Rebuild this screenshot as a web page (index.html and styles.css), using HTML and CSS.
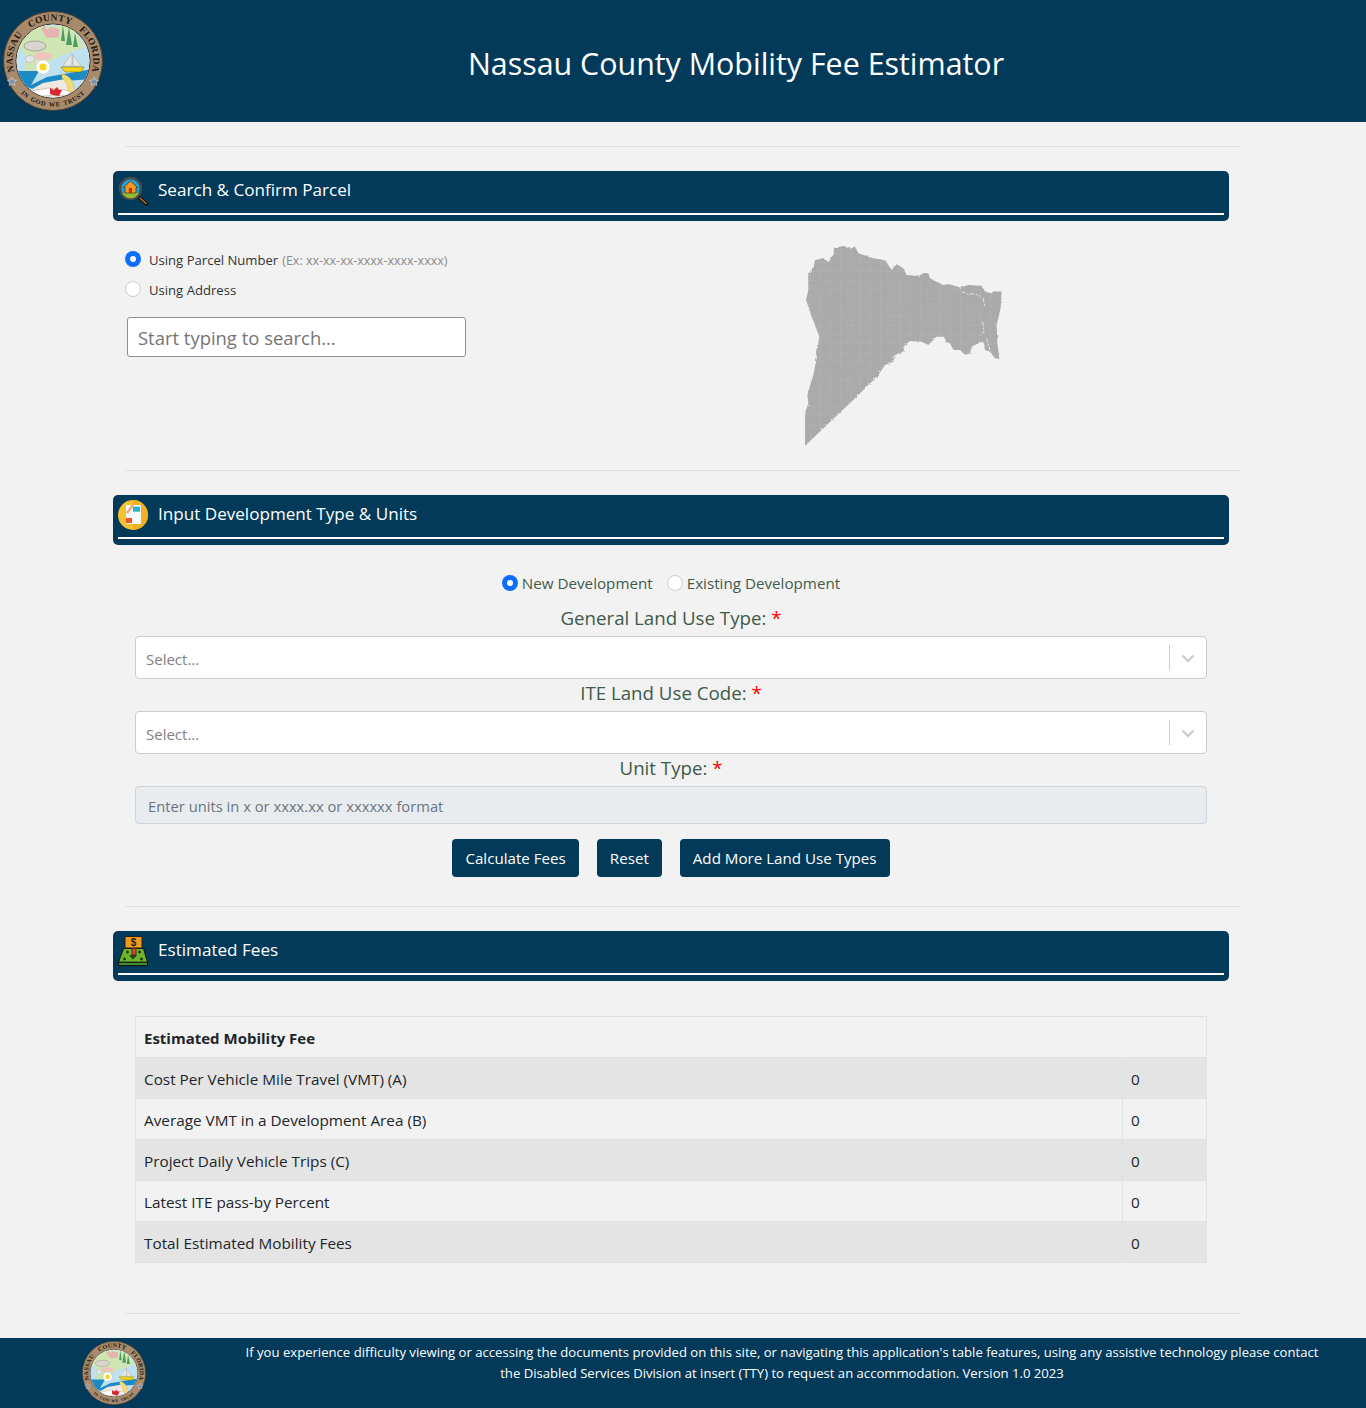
FILE: index.html
```html
<!DOCTYPE html>
<html lang="en">
<head>
  <meta charset="UTF-8">
  <title>Nassau County Mobility Fee Estimator</title>
  <meta name="viewport" content="width=device-width, initial-scale=1.0">
  <link rel="stylesheet" href="styles.css">
</head>
<body>
  <header class="site-header">
    <svg class="site-logo" viewBox="0 0 100 100">
      <defs>
        <path id="arcTop" d="M12 63 A40.200 40.200 0 1 1 88 63"/>
        <path id="arcBottom" d="M11 74 A46 46 0 0 0 89 74"/>
        <clipPath id="sealClip"><circle cx="50" cy="50" r="36.500"/></clipPath>
      </defs>
      <g id="seal">
        <circle cx="50" cy="50" r="49.500" fill="#a88b6c" stroke="#4a3d30" stroke-width="1"/>
        <circle cx="50" cy="50" r="37" fill="#fff" stroke="#3b3228" stroke-width="1"/>
        <g clip-path="url(#sealClip)">
          <rect x="10" y="10" width="80" height="80" fill="#bfe0ee"/>
          <path d="M30 16 L68 14 L82 36 L60 44 L44 52 L34 64 L26 80 L22 60 L24 46 L14 34 L22 24 Z" fill="#cfe5b4"/>
          <path d="M10 60 L36 60 L28 74 L44 66 L90 58 L90 68 L60 70 L30 78 L10 72 Z" fill="#1c8ac4"/>
          <path d="M22 82 L40 72 L62 68 L72 82 L60 90 L36 90 Z" fill="#f1e7e1"/>
          <path d="M28 80 L46 77 L68 80 L66 84 L36 85Z" fill="#fff" stroke="#8d8478" stroke-width=".4"/>
          <path d="M59 63 C67 64 72 72 71 81 L65 80 C65 74 62 69 59 67 Z" fill="#f2db72" stroke="#b89f3c" stroke-width=".3"/>
          <path d="M47 77 L51 79 L54 76 L56 79 L59 79 L56 85 L50 84 L47 83 Z" fill="#d8262f"/>
          <path d="M38 18 L41 15 L44 19 L48 16 L56 18 L56 26 L44 27 Z" fill="#e6b3b0"/>
          <path d="M58 30 L60 14 L62 30 Z M63 34 L66 16 L69 34 Z M70 36 L72 22 L75 36 Z" fill="#4d9a62"/>
          <ellipse cx="32" cy="35" rx="11" ry="5" fill="#d8d5cc" stroke="#77736a" stroke-width=".5"/>
          <ellipse cx="40" cy="45" rx="9.500" ry="4" fill="#f0c4bc"/>
          <ellipse cx="27" cy="48" rx="4.500" ry="3.500" fill="#e4e4e4" stroke="#8a8a8a" stroke-width=".3"/>
          <circle cx="40" cy="56" r="7" fill="#fff" stroke="#bbb" stroke-width=".5" stroke-dasharray="2 1"/>
          <circle cx="40" cy="56" r="3.600" fill="#f7d917"/>
          <path d="M69 42 L69 55 L60 55 Z M70 44 L78 55 L70 55 Z" fill="#e8e6de" stroke="#9a978c" stroke-width=".4"/>
          <path d="M58 56 L81 56 L78 61 L62 61 Z" fill="#f4d516" stroke="#6b5c10" stroke-width=".5"/>
        </g>
        <text class="seal-text"><textPath href="#arcTop" startOffset="50%" text-anchor="middle">NASSAU COUNTY FLORIDA</textPath></text>
        <text class="seal-text small"><textPath href="#arcBottom" startOffset="50%" text-anchor="middle">IN GOD WE TRUST</textPath></text>
        <path d="M9 66 l1.400 3 3.200.3-2.400 2.100.7 3.100-2.900-1.600-2.900 1.600.7-3.100-2.400-2.100 3.200-.3Z" fill="#7d8fa6" stroke="#fff" stroke-width=".4"/>
        <path d="M91 66 l1.400 3 3.200.3-2.400 2.100.7 3.100-2.900-1.600-2.900 1.600.7-3.100-2.400-2.100 3.200-.3Z" fill="#7d8fa6" stroke="#fff" stroke-width=".4"/>
      </g>
    </svg>
    <h1>Nassau County Mobility Fee Estimator</h1>
  </header>

  <main class="page">
    <hr class="rule">

    <section>
      <div class="bar">
        <svg class="bar-icon" viewBox="0 0 30 30">
          <path d="M20 20 L28.500 28" stroke="#111" stroke-width="3.400" stroke-linecap="round"/>
          <path d="M22 22 L28 27.500" stroke="#c4621c" stroke-width="1.600" stroke-linecap="round"/>
          <circle cx="12.500" cy="12.500" r="10.500" fill="#1ba3e0" stroke="#4a4a4a" stroke-width="2.600"/>
          <path d="M4.200 17 H20.800 A9.200 9.200 0 0 1 4.200 17Z" fill="#8fbf2e"/>
          <path d="M12.500 5 L19.500 11.500 H18 V17 H7 V11.500 H5.500Z" fill="#f39a1e" stroke="#5a3208" stroke-width=".8"/>
          <rect x="10.900" y="12" width="3.200" height="5" fill="#c2311e"/>
        </svg>
        <h2>Search &amp; Confirm Parcel</h2>
      </div>
      <div class="parcel">
        <div class="parcel-form">
          <label class="opt"><span class="radio on"></span>Using Parcel Number <small>(Ex: xx-xx-xx-xxxx-xxxx-xxxx)</small></label>
          <label class="opt"><span class="radio"></span>Using Address</label>
          <input class="search" type="text" placeholder="Start typing to search...">
        </div>
        <svg class="county" viewBox="0 0 675 660">
          <defs>
            <filter id="rough" x="-5%" y="-5%" width="110%" height="110%">
              <feTurbulence type="fractalNoise" baseFrequency="0.15" numOctaves="2" seed="4"/>
              <feDisplacementMap in="SourceGraphic" scale="8"/>
            </filter>
            <pattern id="lots" width="30" height="27" patternUnits="userSpaceOnUse">
              <rect width="30" height="27" fill="#aaa"/>
              <path d="M0 .5H30M.5 0V27" stroke="#b6b6b6" stroke-width="1.500"/>
            </pattern>
          </defs>
          <path filter="url(#rough)" fill="url(#lots)" d="M45 632 45 535 55 505 52 480 58 458 70 420 80 370 78 350 85 320 88 305 75 270 65 245 55 215 48 195 55 165 55 115 70 100 75 75 100 70 115 80 130 60 132 38 160 33 185 40 195 35 205 55 250 70 285 75 305 105 320 88 340 100 350 120 385 123 400 115 415 115 420 130 440 140 460 150 480 148 510 158 535 150 575 152 585 170 605 175 610 168 635 170 632 220 620 270 622 320 628 372 615 370 600 350 585 345 580 320 565 325 545 335 540 355 525 360 510 345 490 345 480 325 465 320 465 305 440 305 415 330 395 320 360 318 345 330 340 350 315 360 310 380 285 390 265 420 200 485Z"/>
          <path fill="none" stroke="#f2f2f2" stroke-width="2.500" stroke-dasharray="12 5 6 4" d="M515 170 535 178 552 176 572 184M580 190 584 215M578 260 582 290 572 302M590 310 600 345"/>
        </svg>
      </div>
    </section>

    <hr class="rule">

    <section>
      <div class="bar">
        <svg class="bar-icon" viewBox="0 0 30 30">
          <circle cx="15" cy="15" r="15" fill="#f7c02e"/>
          <path d="M15 0A15 15 0 0 1 15 30Z" fill="#efb021"/>
          <rect x="8" y="5" width="15" height="19" fill="#f3f8f8"/>
          <rect x="15" y="6.700" width="7" height="5" fill="#27b4c8"/>
          <rect x="8" y="18" width="6" height="5" fill="#f0562c"/>
          <path d="M9 13 L15 5" stroke="#e8a878" stroke-width="2.400"/>
        </svg>
        <h2>Input Development Type &amp; Units</h2>
      </div>
      <div class="dev">
        <div class="dev-type">
          <label class="choice"><span class="radio on"></span>New Development</label>
          <label class="choice"><span class="radio"></span>Existing Development</label>
        </div>
        <div class="field-label">General Land Use Type: <b>*</b></div>
        <div class="select">
          <span class="select-text">Select...</span>
          <span class="select-sep"></span>
          <svg class="chevron" viewBox="0 0 20 20"><path d="M4.500 7.500 10 13l5.500-5.500" fill="none" stroke="#ccc" stroke-width="2.400"/></svg>
        </div>
        <div class="field-label">ITE Land Use Code: <b>*</b></div>
        <div class="select">
          <span class="select-text">Select...</span>
          <span class="select-sep"></span>
          <svg class="chevron" viewBox="0 0 20 20"><path d="M4.500 7.500 10 13l5.500-5.500" fill="none" stroke="#ccc" stroke-width="2.400"/></svg>
        </div>
        <div class="field-label">Unit Type: <b>*</b></div>
        <input class="units" type="text" disabled placeholder="Enter units in x or xxxx.xx or xxxxxx format">
        <div class="actions">
          <button>Calculate Fees</button>
          <button>Reset</button>
          <button>Add More Land Use Types</button>
        </div>
      </div>
    </section>

    <hr class="rule rule-fees">

    <section>
      <div class="bar">
        <svg class="bar-icon" viewBox="0 0 30 30">
          <path d="M5.500 12.500 H25.500 L29.500 26.300 H.5Z" fill="#6fb52c" stroke="#111" stroke-width="1"/>
          <rect x=".5" y="26.300" width="29" height="3.200" fill="#3f8f2a" stroke="#111" stroke-width="1"/>
          <path d="M8 16h3M9.500 14.500v3M20 16h3M21.500 14.500v3M5 23h3M6.500 21.500v3M22 23h3M23.500 21.500v3M12.500 20h5l-2.500 2.500z" stroke="#173d10" stroke-width="1.300" fill="none"/>
          <rect x="14" y="12" width="4" height="7" fill="#e8442a" stroke="#222" stroke-width=".8"/>
          <rect x="7" y=".5" width="17" height="11.500" fill="#f39a1e" stroke="#222" stroke-width="1"/>
          <text class="sign-text" x="15.500" y="9.800">$</text>
        </svg>
        <h2>Estimated Fees</h2>
      </div>
      <table class="fees">
        <tr><th colspan="2">Estimated Mobility Fee</th></tr>
        <tr><td>Cost Per Vehicle Mile Travel (VMT) (A)</td><td class="val">0</td></tr>
        <tr><td>Average VMT in a Development Area (B)</td><td class="val">0</td></tr>
        <tr><td>Project Daily Vehicle Trips (C)</td><td class="val">0</td></tr>
        <tr><td>Latest ITE pass-by Percent</td><td class="val">0</td></tr>
        <tr><td>Total Estimated Mobility Fees</td><td class="val">0</td></tr>
      </table>
    </section>

    <hr class="rule rule-end">
  </main>

  <footer class="site-footer">
    <div class="footer-logo"><svg class="footer-seal" viewBox="0 0 100 100"><use href="#seal"/></svg></div>
    <p>If you experience difficulty viewing or accessing the documents provided on this site, or navigating this application's table features, using any assistive technology please contact the Disabled Services Division at insert (TTY) to request an accommodation. Version 1.0 2023</p>
  </footer>
</body>
</html>
```

FILE: styles.css
```css
* { box-sizing:border-box; }
body { margin:0; background:#f2f2f2; font-family:"Open Sans","Noto Sans",sans-serif; color:#212529; }
.seal-text { font-family:"Liberation Serif",serif; font-weight:bold; font-size:9.5px; fill:#1c1710; letter-spacing:.3px; word-spacing:7px; }
.seal-text.small { font-size:6.5px; letter-spacing:.6px; word-spacing:1px; }
.sign-text { font-family:"Liberation Sans",sans-serif; font-weight:bold; font-size:10px; text-anchor:middle; fill:#222; }

.site-header {
  height:122px; background:#033a5a; color:#fff;
  display:grid; grid-template-columns:106px 1fr; align-items:center;
}
.site-logo { width:100px; height:100px; margin-left:3px; }
.site-header h1 { margin:0; text-align:center; font-size:30.4px; font-weight:400; position:relative; top:2px; }

.page { width:1140px; margin:0 auto; padding:0 12px; }
.rule { border:none; height:1px; background:#e1e1e1; margin:24px 0; width:1115px; }

.bar {
  height:50px; margin:0 12px 0 -12px; padding:5px 5px 0;
  background:#033a5a; color:#fff; border-radius:5px;
  display:flex; align-items:flex-start; gap:10px; position:relative;
}
.bar::after { content:""; position:absolute; left:5px; right:5px; bottom:6px; height:2px; background:#fff; }
.bar-icon { width:30px; height:30px; flex:none; }
.bar h2 { margin:0; font-size:17.1px; line-height:28px; font-weight:400; }

.parcel { display:flex; height:225px; padding-top:25px; }
.parcel-form { width:665px; }
.opt { display:flex; align-items:center; height:30px; padding-top:2px; font-size:13.1px; color:#333; }
.opt:first-child { margin-top:-2px; }
.opt small { font-size:12.5px; color:#8a8a8a; margin-left:4px; }
.opt .radio { margin:-2px 8px 0 0; }
.radio {
  display:inline-block; width:16px; height:16px; border-radius:50%;
  background:#fff; border:1px solid #ccc; flex:none;
}
.radio.on { background:#0d6efd; border:none; position:relative; }
.radio.on::after { content:""; position:absolute; left:5px; top:5px; width:6px; height:6px; border-radius:50%; background:#fff; }
.search {
  display:block; width:339px; height:40px; margin:13px 0 0 2px; padding:0 10px;
  border:1px solid #8f8f8f; border-radius:3px; background:#fff;
  font:18.45px "Open Sans",sans-serif;
}
.search::placeholder { color:#757575; }
.county { width:225px; height:220px; margin-top:-11px; }

.dev { margin:0 12px 0 -12px; padding:26px 22px 0; }
.dev-type { display:flex; justify-content:center; gap:14px; height:24px; margin-bottom:9px; }
.choice { display:flex; align-items:center; gap:4px; font-size:15.2px; color:#3f5a4b; }
.field-label { height:32px; line-height:28px; text-align:center; font-size:18.7px; color:#3f5a4b; }
.field-label b { color:#f00; font-weight:400; }
.select {
  height:43px; background:#fff; border:1px solid #ccc; border-radius:4px;
  display:flex; align-items:center; padding-left:10px;
}
.select-text { flex:1; font-size:15px; color:#808080; position:relative; top:1px; }
.select-sep { width:1px; height:25px; background:#ccc; }
.chevron { width:20px; height:20px; margin:0 8px; }
.units {
  display:block; width:100%; height:38px; padding:2px 12px 0; border:1px solid #ced4da;
  border-radius:4px; background:#e9ecef; font:14.75px "Open Sans",sans-serif;
}
.units::placeholder { color:#6c757d; }
.actions { display:flex; justify-content:center; gap:18px; margin-top:15px; }
.actions button {
  height:38px; padding:0 13px; border:none; border-radius:4px;
  background:#033a5a; color:#fff; font:15.15px "Open Sans",sans-serif;
}
.rule-fees { margin-top:29px; }

.fees {
  width:1072px; margin:35px 0 0 10px; border-collapse:collapse; font-size:15.3px; line-height:24px;
}
.fees th, .fees td { height:41px; padding:9px 8px 7px; border:1px solid #dfe2e5; text-align:left; }
.fees th { font-size:15px; }
.fees tr:nth-child(even) td { background:#e4e4e4; }
.fees .val { width:84px; }
.rule-end { margin-top:50px; }

.site-footer { height:70px; background:#033a5a; color:#fff; display:flex; }
.footer-logo { width:228px; display:flex; justify-content:center; padding-top:3px; }
.footer-seal { width:64px; height:64px; }
.site-footer p { margin:4px 0 0; width:1108px; padding:0 17px; text-align:center; font-size:13.12px; line-height:21px; }
```
